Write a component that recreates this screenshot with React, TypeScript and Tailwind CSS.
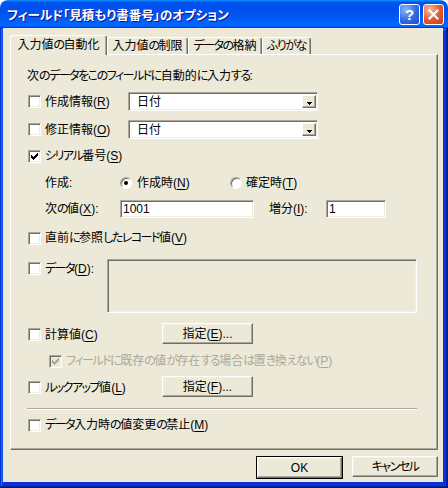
import React from "react";

const U = ({ c }: { c: string }) => (
  <span className="underline decoration-1 underline-offset-[2px]">{c}</span>
);

const isKana = (ch: string) => /[\u3040-\u30ff]/.test(ch);

function JP({ t }: { t: string }) {
  const runs: { k: boolean; s: string }[] = [];
  for (const ch of t) {
    const k = isKana(ch);
    const last = runs[runs.length - 1];
    if (last && last.k === k) last.s += ch;
    else runs.push({ k, s: ch });
  }
  return (
    <>
      {runs.map((r, i) =>
        r.k ? (
          <span key={i} className="tracking-[-1.5px]">
            {r.s}
          </span>
        ) : (
          <React.Fragment key={i}>{r.s}</React.Fragment>
        )
      )}
    </>
  );
}

function Lbl({ t, m, after = "" }: { t: string; m: string; after?: string }) {
  return (
    <span className="whitespace-nowrap">
      <JP t={t} />(<U c={m} />){after}
    </span>
  );
}

function Check({ checked = false, disabled = false }: { checked?: boolean; disabled?: boolean }) {
  const cols: [number, number][] = [
    [1, 3],
    [2, 4],
    [3, 5],
    [4, 4],
    [5, 3],
    [6, 2],
    [7, 1],
  ];
  return (
    <span
      className={`relative flex w-[13px] h-[13px] shrink-0 border border-[#aca899] border-r-white border-b-white shadow-[inset_1px_1px_0_#716f64,inset_-1px_-1px_0_#f1efe2] ${
        disabled ? "bg-[#ece9d8]" : "bg-white"
      }`}
    >
      {checked && (
        <svg
          className="absolute left-[1px] top-[1px]"
          width="9"
          height="9"
          viewBox="0 0 9 9"
          shapeRendering="crispEdges"
        >
          {cols.map(([x, y]) => (
            <rect key={x} x={x} y={y} width="1" height="3" fill={disabled ? "#aca899" : "#000"} />
          ))}
        </svg>
      )}
    </span>
  );
}

function Radio({ on = false }: { on?: boolean }) {
  return (
    <span className="relative flex w-[12px] h-[12px] shrink-0 rounded-full bg-white border border-[#aca899] border-r-white border-b-white shadow-[inset_1px_1px_0_#716f64]">
      {on && <span className="absolute left-[3px] top-[3px] w-[4px] h-[4px] rounded-full bg-black" />}
    </span>
  );
}

function Combo({ value }: { value: string }) {
  return (
    <div className="flex items-center w-[190px] h-[19px] bg-white border border-[#aca899] border-r-white border-b-white shadow-[inset_1px_1px_0_#716f64,inset_-1px_-1px_0_#f1efe2]">
      <span className="flex-1 pl-[8px]">{value}</span>
      <span className="mr-[1px] flex w-[14px] h-[13px] items-center justify-center bg-[#ece9d8] border border-white border-r-[#716f64] border-b-[#716f64] shadow-[inset_-1px_-1px_0_#aca899]">
        <svg width="5" height="3" viewBox="0 0 5 3" shapeRendering="crispEdges" className="mt-[3px]">
          <polygon points="0,0 5,0 2.5,3" fill="#000" />
        </svg>
      </span>
    </div>
  );
}

function Field({ value, w }: { value: string; w: string }) {
  return (
    <div
      className={`flex items-center h-[18px] pl-[2px] bg-white border border-[#aca899] border-r-white border-b-white shadow-[inset_1px_1px_0_#716f64,inset_-1px_-1px_0_#f1efe2] ${w}`}
    >
      {value}
    </div>
  );
}

function Btn({ children, w }: { children: React.ReactNode; w: string }) {
  return (
    <div
      className={`flex items-center justify-center h-[21px] bg-[#ece9d8] border border-white border-r-[#716f64] border-b-[#716f64] shadow-[inset_-1px_-1px_0_#aca899,inset_1px_1px_0_#f1efe2] ${w}`}
    >
      {children}
    </div>
  );
}

export default function App() {
  return (
    <div className="w-[448px] h-[488px] bg-white text-[12px] leading-none text-black font-[family-name:'Liberation_Sans','Noto_Sans_CJK_JP',sans-serif] [font-feature-settings:'palt']">
      <div className="flex flex-col w-full h-full rounded-t-[8px] overflow-hidden">
        {/* Title bar */}
        <div className="flex items-center h-[28px] shrink-0 pl-[7px] pr-[4px] bg-[linear-gradient(180deg,#0997ff,#0053ee_8%,#0050ee_40%,#0066ff_88%,#0066ff_93%,#005bff_95%,#003dd7_96%,#003dd7)]">
          <span className="flex-1 text-white font-bold text-[12.5px] [text-shadow:1px_1px_#0f1089] font-[family-name:'Noto_Sans_CJK_JP',sans-serif] pt-[2px]">
            フィールド「見積もり書番号」のオプション
          </span>
          <div className="flex gap-[3px]">
            <div className="flex items-center justify-center w-[21px] h-[21px] rounded-[3px] border border-white bg-[radial-gradient(circle_at_30%_25%,#8fb4fa,#2e6ae6_55%,#1b4fcf)] text-white font-bold text-[15px] font-[family-name:'Liberation_Sans',sans-serif]">
              ?
            </div>
            <div className="flex items-center justify-center w-[21px] h-[21px] rounded-[3px] border border-white bg-[radial-gradient(circle_at_30%_25%,#f6b79c,#e2582f_55%,#c63d17)]">
              <svg width="11" height="11" viewBox="0 0 11 11">
                <path d="M1.5 1.5 L9.5 9.5 M9.5 1.5 L1.5 9.5" stroke="#fff" strokeWidth="2" strokeLinecap="square" />
              </svg>
            </div>
          </div>
        </div>

        {/* Frame */}
        <div className="flex-1 flex flex-col pl-[3px] pr-[5px] pb-[6px] bg-[#0831d9] shadow-[inset_-1px_-1px_#00138c,inset_1px_1px_#0831d9,inset_-2px_-2px_#001ea0,inset_2px_2px_#166aee,inset_-3px_-3px_#003bda,inset_3px_3px_#0855dd]">
          <div className="flex-1 flex flex-col bg-[#ece9d8] pl-[7px] pr-[5px] pt-[7px]">
            {/* Tabs */}
            <div className="relative z-10 flex items-start h-[20px] whitespace-nowrap">
              <div className="flex items-center justify-center w-[97px] h-[20px] pb-[2px] bg-[#ece9d8] border-l border-t border-r border-white border-r-[#716f64] rounded-t-[3px] shadow-[inset_-1px_0_0_#aca899]">
                <JP t="入力値の自動化" />
              </div>
              <div className="flex items-center justify-center mt-[2px] w-[81px] h-[17px] border-l border-t border-r border-white border-r-[#716f64] rounded-t-[3px] shadow-[inset_-1px_0_0_#aca899]">
                <JP t="入力値の制限" />
              </div>
              <div className="flex items-center justify-center mt-[2px] w-[74px] h-[17px] border-l border-t border-r border-white border-r-[#716f64] rounded-t-[3px] shadow-[inset_-1px_0_0_#aca899]">
                <JP t="データの格納" />
              </div>
              <div className="flex items-center justify-center mt-[2px] w-[49px] h-[17px] border-l border-t border-r border-white border-r-[#716f64] rounded-t-[3px] shadow-[inset_-1px_0_0_#aca899]">
                <JP t="ふりがな" />
              </div>
            </div>

            {/* Panel */}
            <div className="-mt-px h-[396px] flex flex-col pl-[17px] border border-white border-r-[#716f64] border-b-[#716f64] shadow-[inset_-1px_-1px_0_#aca899] whitespace-nowrap">
              <div className="mt-[12px] h-[18px] flex items-center -ml-px">
                <span>
                  <JP t="次のデータをこのフィールドに自動的に入力する" />:
                </span>
              </div>

              <div className="mt-[7px] h-[19px] flex items-center">
                <div className="w-[100px] flex items-center gap-[4px]">
                  <Check />
                  <Lbl t="作成情報" m="R" />
                </div>
                <Combo value="日付" />
              </div>

              <div className="mt-[9px] h-[19px] flex items-center">
                <div className="w-[100px] flex items-center gap-[4px]">
                  <Check />
                  <Lbl t="修正情報" m="O" />
                </div>
                <Combo value="日付" />
              </div>

              <div className="mt-[8px] h-[18px] flex items-center gap-[4px]">
                <Check checked />
                <Lbl t="シリアル番号" m="S" />
              </div>

              <div className="mt-[9px] h-[18px] flex items-center pl-[17px]">
                <span className="w-[75px]">作成:</span>
                <div className="w-[110px] flex items-center gap-[5px]">
                  <Radio on />
                  <Lbl t="作成時" m="N" />
                </div>
                <div className="flex items-center gap-[4px]">
                  <Radio />
                  <Lbl t="確定時" m="T" />
                </div>
              </div>

              <div className="mt-[8px] h-[18px] flex items-center pl-[17px]">
                <span className="w-[75px]">
                  <Lbl t="次の値" m="X" after=":" />
                </span>
                <Field value="1001" w="w-[134px]" />
                <span className="ml-[15px] w-[57px]">
                  <Lbl t="増分" m="I" after=":" />
                </span>
                <Field value="1" w="w-[60px]" />
              </div>

              <div className="mt-[11px] h-[18px] flex items-center gap-[4px]">
                <Check />
                <Lbl t="直前に参照したレコード値" m="V" />
              </div>

              <div className="mt-[12px] h-[54px] flex items-start">
                <div className="w-[79px] h-[19px] flex items-center gap-[4px]">
                  <Check />
                  <Lbl t="データ" m="D" after=":" />
                </div>
                <div className="w-[310px] h-[54px] border border-[#aca899] border-r-white border-b-white shadow-[inset_1px_1px_0_#716f64,inset_-1px_-1px_0_#f1efe2]" />
              </div>

              <div className="mt-[10px] h-[21px] flex items-center">
                <div className="w-[134px] flex items-center gap-[4px] mt-[2px]">
                  <Check />
                  <Lbl t="計算値" m="C" />
                </div>
                <Btn w="w-[91px]">
                  <Lbl t="指定" m="E" after="..." />
                </Btn>
              </div>

              <div className="mt-[8px] h-[18px] flex items-center gap-[4px] pl-[21px] text-[#aca899]">
                <Check checked disabled />
                <Lbl t="フィールドに既存の値が存在する場合は置き換えない" m="P" />
              </div>

              <div className="mt-[6px] h-[21px] flex items-center">
                <div className="w-[134px] flex items-center gap-[4px] mt-[2px]">
                  <Check />
                  <Lbl t="ルックアップ値" m="L" />
                </div>
                <Btn w="w-[91px]">
                  <Lbl t="指定" m="F" after="..." />
                </Btn>
              </div>

              <div className="mt-[11px] h-[2px] w-[390px] -ml-px border-t border-[#aca899] border-b border-b-white" />

              <div className="mt-[6px] h-[18px] flex items-center gap-[4px]">
                <Check />
                <Lbl t="データ入力時の値変更の禁止" m="M" />
              </div>
            </div>

            {/* Bottom buttons */}
            <div className="mt-[6px] flex justify-end gap-[9px]">
              <div className="border border-black">
                <Btn w="w-[85px] h-[19px]">OK</Btn>
              </div>
              <Btn w="w-[86px]">
                <JP t="キャンセル" />
              </Btn>
            </div>
          </div>
        </div>
      </div>
    </div>
  );
}
